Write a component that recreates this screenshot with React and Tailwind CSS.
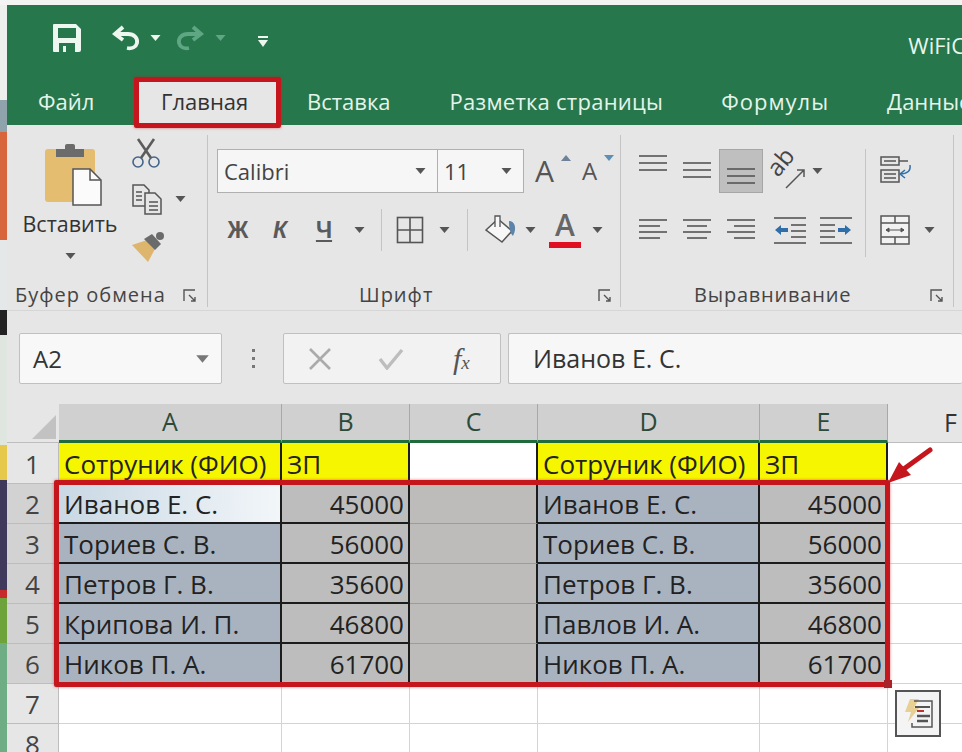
import React from 'react';

const UI = { fontFamily: '"Open Sans", "Noto Sans", sans-serif' };

const stripes = [
  ['h-[5px]', 'bg-[#f4f4f4]'],
  ['h-[95px]', 'bg-[#eef0ee]'],
  ['h-[32px]', 'bg-[#8fa3ad]'],
  ['h-[108px]', 'bg-[#d8663c]'],
  ['h-[70px]', 'bg-[#e4e8e8]'],
  ['h-[25px]', 'bg-[#222222]'],
  ['h-[110px]', 'bg-[#dfe6e0]'],
  ['h-[35px]', 'bg-[#e6c94a]'],
  ['h-[110px]', 'bg-[#3f3a5c]'],
  ['h-[8px]', 'bg-[#c62a2a]'],
  ['h-[45px]', 'bg-[#6ea33c]'],
  ['h-[109px]', 'bg-[#6fae84]'],
];

const Caret = ({ className = '', color = '#555555' }) => (
  <svg width="11" height="8" viewBox="0 0 11 8" className={`shrink-0 ${className}`}>
    <path d="M0.5 1h10L5.5 7z" fill={color} />
  </svg>
);

const Launcher = ({ className = '' }) => (
  <svg width="14" height="14" viewBox="0 0 14 14" className={className} fill="none" stroke="#555555" strokeWidth="1.4">
    <path d="M1 12V1h11" />
    <path d="M6 6l6 6M12 8v4H8" />
  </svg>
);

const SaveIcon = () => (
  <svg width="30" height="30" viewBox="0 0 30 30">
    <path fillRule="evenodd" fill="#eef6f0" d="M2 1h22l5 5v21a2 2 0 0 1-2 2H2a1 1 0 0 1-1-1V2a1 1 0 0 1 1-1zM6 5v10h18V5zM7 20v9h4v-6h3v6h9v-9z" />
  </svg>
);

const UndoIcon = ({ color, opacity = 1 }) => (
  <svg width="30" height="28" viewBox="0 0 30 28" fill="none" stroke={color} strokeWidth="3.8" opacity={opacity}>
    <path d="M12 3L4 10l8 6" />
    <path d="M4 10h13c6 0 10 4 9 9-1 4-5 6-10 5" />
  </svg>
);

const Lines = ({ rows, size = 30 }) => (
  <svg width={size} height={size} viewBox="0 0 30 30" stroke="#555555" strokeWidth="1.6">
    {rows.map(([x1, x2, y]) => (
      <line key={`${x1}-${y}`} x1={x1} x2={x2} y1={y} y2={y} />
    ))}
  </svg>
);

const Indent = ({ flip }) => (
  <svg width="34" height="30" viewBox="0 0 34 30" stroke="#555555" strokeWidth="1.6" className={flip ? '-scale-x-100' : ''}>
    <line x1="1" x2="33" y1="3" y2="3" />
    <line x1="18" x2="33" y1="10" y2="10" />
    <line x1="18" x2="33" y1="16" y2="16" />
    <line x1="18" x2="33" y1="22" y2="22" />
    <line x1="1" x2="33" y1="28" y2="28" />
    <path d="M2 15l6-5v3h7v4H8v3z" fill="#2f6ea8" stroke="none" />
  </svg>
);

const Slot = ({ children, className = '' }) => (
  <div className={`flex h-[44px] items-center justify-center ${className}`}>{children}</div>
);

function QuickAccess() {
  return (
    <div className="flex h-[73px] shrink-0 items-center pb-[8px]">
      <div className="ml-[45px]"><SaveIcon /></div>
      <div className="ml-[29px]"><UndoIcon color="#eef6f0" /></div>
      <Caret className="ml-[9px]" color="#eef6f0" />
      <div className="ml-[14px]" style={{ transform: 'scaleX(-1)' }}><UndoIcon color="#5fa684" /></div>
      <Caret className="ml-[10px]" color="#5fa684" />
      <svg width="12" height="12" viewBox="0 0 12 12" className="ml-[31px] mt-[8px]" fill="#eef6f0">
        <rect x="1" y="0" width="10" height="2" />
        <path d="M1 4h10L6 11z" />
      </svg>
      <span className="ml-auto mr-[-3px] mt-[16px] whitespace-nowrap text-[22px] text-[#e8f6ee]">WiFiC</span>
    </div>
  );
}

function Tabs() {
  return (
    <div className="flex h-[47px] shrink-0 items-center whitespace-nowrap text-[22px] text-[#e4f4ea]">
      <span className="ml-[31px] w-[58px] shrink-0 font-medium">Файл</span>
      <span className="ml-[42px] flex h-full w-[138px] shrink-0 items-center self-end bg-[#e6e6e6] pl-[23px] text-[#333333]">Главная</span>
      <span className="ml-[31px] shrink-0">Вставка</span>
      <span className="ml-[59px] shrink-0 tracking-[0.25px]">Разметка страницы</span>
      <span className="ml-[58px] shrink-0 tracking-[1px]">Формулы</span>
      <span className="ml-[58px] shrink-0">Данные</span>
    </div>
  );
}

function Clipboard() {
  return (
    <div className="flex h-[172px] w-[201px] shrink-0 flex-col border-r border-[#c4c4c4]">
      <div className="flex flex-1">
        <div className="ml-[13px] flex w-[100px] flex-col items-center">
          <svg width="60" height="64" viewBox="0 0 60 64" className="ml-[9px] mt-[7px]">
            <rect x="0" y="7" width="50" height="53" rx="3" fill="#e5bd70" />
            <rect x="11" y="7" width="28" height="8" fill="#6b6b6b" />
            <rect x="20" y="2" width="10" height="7" rx="2" fill="#6b6b6b" />
            <path d="M28 27h17l11 11v25H28z" fill="#fbfbfb" stroke="#555555" strokeWidth="1.5" />
            <path d="M45 27v11h11" fill="none" stroke="#555555" strokeWidth="1.5" />
          </svg>
          <span className="mt-[4px] whitespace-nowrap text-[21.5px] leading-[28px] text-[#333333]">Вставить</span>
          <Caret className="mt-[14px]" />
        </div>
        <div className="ml-[11px] flex flex-col">
          <svg width="30" height="30" viewBox="0 0 30 30" className="mt-[3px]" fill="none">
            <circle cx="7" cy="24" r="5" stroke="#44638a" strokeWidth="1.6" />
            <circle cx="23" cy="24" r="5" stroke="#44638a" strokeWidth="1.6" />
            <path d="M10 20L23 1M20 20L7 1" stroke="#5c5c5c" strokeWidth="2.6" />
          </svg>
          <div className="mt-[15px] flex items-center">
            <svg width="32" height="32" viewBox="0 0 32 32" fill="#e6e6e6" stroke="#555555" strokeWidth="1.5">
              <path d="M2 2h11l5 5v16H2z" />
              <path d="M14 10h10l6 6v15H14z" />
              <path d="M5 9h6M5 13h6M5 17h6M18 19h9M18 23h9M18 27h9" fill="none" />
            </svg>
            <Caret className="ml-[12px]" />
          </div>
          <svg width="34" height="32" viewBox="0 0 34 32" className="mt-[16px]">
            <path d="M1 14l15-5 8 9-7 13z" fill="#deb56c" />
            <path d="M13 8l8-5 9 10-6 6z" fill="#6b6b6b" />
            <circle cx="29" cy="5" r="4" fill="#6b6b6b" />
          </svg>
        </div>
      </div>
      <div className="flex h-[24px] items-center pr-[10px] text-[20px] text-[#444444]">
        <span className="ml-[8px] whitespace-nowrap tracking-[1px]">Буфер обмена</span>
        <Launcher className="ml-auto mt-[2px]" />
      </div>
    </div>
  );
}

function FontGroup() {
  return (
    <div className="flex h-[172px] w-[413px] shrink-0 flex-col border-r border-[#c4c4c4] pl-[9px] pt-[14px]">
      <div className="flex h-[44px] items-center">
        <div className="flex h-full w-[221px] items-center border border-[#b0b0b0] bg-[#f6f6f6] pl-[6px] pr-[11px] text-[22px] text-[#444444]">
          <span className="flex-1">Calibri</span>
          <Caret />
        </div>
        <div className="flex h-full w-[86px] items-center border border-l-0 border-[#b0b0b0] bg-[#f6f6f6] pl-[6px] pr-[11px] text-[22px] text-[#444444]">
          <span className="flex-1">11</span>
          <Caret />
        </div>
        <div className="relative ml-[11px] w-[36px] text-[30px] leading-[44px] text-[#555555]">
          A
          <svg width="10" height="6" viewBox="0 0 10 6" className="absolute right-[0px] top-[6px]"><path d="M0 6h10L5 0z" fill="#6d8296" /></svg>
        </div>
        <div className="relative ml-[11px] w-[36px] text-[24px] leading-[44px] text-[#555555]">
          A
          <svg width="10" height="6" viewBox="0 0 10 6" className="absolute right-[4px] top-[6px]"><path d="M0 0h10L5 6z" fill="#5f8fb4" /></svg>
        </div>
      </div>
      <div className="mt-[15px] flex h-[44px] items-center text-[#5a5a5a]">
        <span className="ml-[7px] w-[28px] text-center text-[23px] font-bold" style={{ fontFamily: '"Liberation Sans", sans-serif' }}>Ж</span>
        <span className="ml-[14px] w-[28px] text-center text-[23px] font-bold italic" style={{ fontFamily: '"Liberation Sans", sans-serif' }}>К</span>
        <span className="ml-[16px] w-[28px] text-center text-[23px] font-bold underline" style={{ fontFamily: '"Liberation Sans", sans-serif' }}>Ч</span>
        <Caret className="ml-[16px]" />
        <div className="ml-[16px] h-[42px] w-px bg-[#c4c4c4]" />
        <svg width="28" height="28" viewBox="0 0 28 28" className="ml-[14px]" fill="none" stroke="#555555" strokeWidth="1.6">
          <rect x="1.5" y="1.5" width="25" height="25" />
          <path d="M14 1.5v25M1.5 14h25" />
        </svg>
        <Caret className="ml-[15px]" />
        <div className="ml-[17px] h-[42px] w-px bg-[#c4c4c4]" />
        <svg width="32" height="32" viewBox="0 0 32 32" className="ml-[17px]" fill="none">
          <path d="M1 16L13 5l14 12-10 11z" fill="#f7f7f7" stroke="#555555" strokeWidth="1.5" />
          <path d="M10 13V2h5v11" fill="#f7f7f7" stroke="#555555" strokeWidth="1.3" />
          <path d="M24 7c6 0 8 7 4 15-3-3-4-8-4-15z" fill="#5c83a8" />
        </svg>
        <Caret className="ml-[8px]" />
        <div className="relative ml-[13px] flex h-[44px] w-[32px] flex-col items-center">
          <span className="text-[30px] font-semibold leading-[34px] text-[#666666]">A</span>
          <div className="h-[6px] w-[32px] bg-[#e00f22]" />
        </div>
        <Caret className="ml-[11px]" />
      </div>
      <div className="mt-auto flex h-[24px] items-center pr-[8px] text-[20px] text-[#444444]">
        <span className="ml-[142px] tracking-[1px]">Шрифт</span>
        <Launcher className="ml-auto mt-[2px]" />
      </div>
    </div>
  );
}

function AlignGroup() {
  return (
    <div className="flex h-[172px] w-[333px] shrink-0 flex-col border-r border-[#c4c4c4] pl-[10px] pt-[14px]">
      <div className="flex h-[44px] items-center">
        <Slot className="w-[44px] pb-[12px]"><Lines rows={[[1, 29, 6], [1, 29, 13], [1, 29, 20]]} /></Slot>
        <Slot className="w-[44px] pb-[2px]"><Lines rows={[[1, 29, 8], [1, 29, 15], [1, 29, 22]]} /></Slot>
        <Slot className="w-[44px] border border-[#a6a6a6] bg-[#bfbfbf] pt-[10px]"><Lines rows={[[1, 29, 8], [1, 29, 15], [1, 29, 22]]} /></Slot>
        <svg width="36" height="38" viewBox="0 0 36 38" className="ml-[9px] overflow-visible">
          <text x="6" y="26" fontSize="24" fill="#444444" transform="rotate(-50 6 26)" style={UI}>ab</text>
          <path d="M14 36L32 18M25 18h7v7" fill="none" stroke="#555555" strokeWidth="1.5" />
        </svg>
        <Caret className="ml-[4px]" />
        <div className="ml-[42px] h-[108px] w-px self-start bg-[#c4c4c4]" />
        <svg width="32" height="32" viewBox="0 0 32 32" className="ml-[14px]" fill="none" stroke="#555555" strokeWidth="1.5">
          <rect x="1" y="2" width="18" height="8" />
          <path d="M4 6h12M19 6h9" />
          <rect x="1" y="15" width="18" height="12" fill="#e6e6e6" />
          <path d="M4 19h12M4 23h12" />
          <path d="M30 10c1 6-3 9-10 9M25 15l-5 4 5 4" stroke="#2f6ea8" />
        </svg>
      </div>
      <div className="mt-[15px] flex h-[44px] items-center">
        <Slot className="w-[44px]"><Lines rows={[[1, 29, 5], [1, 22, 11], [1, 29, 17], [1, 22, 23]]} /></Slot>
        <Slot className="w-[44px]"><Lines rows={[[1, 29, 5], [5, 25, 11], [1, 29, 17], [5, 25, 23]]} /></Slot>
        <Slot className="w-[44px]"><Lines rows={[[1, 29, 5], [8, 29, 11], [1, 29, 17], [8, 29, 23]]} /></Slot>
        <div className="ml-[10px]"><Indent /></div>
        <div className="ml-[12px]"><Indent flip /></div>
        <svg width="30" height="30" viewBox="0 0 30 30" className="ml-[27px]" fill="#f2f2f2" stroke="#555555" strokeWidth="1.5">
          <rect x="1" y="1" width="28" height="28" />
          <path d="M1 8h28M1 22h28M15 1v7M15 22v7" fill="none" />
          <path d="M6 15h18M6 15l3-2v4zM24 15l-3-2v4z" fill="#555555" strokeWidth="1" />
        </svg>
        <Caret className="ml-[14px]" />
      </div>
      <div className="mt-auto flex h-[24px] items-center pr-[9px] text-[20px] text-[#444444]">
        <span className="ml-[63px] tracking-[0.8px]">Выравнивание</span>
        <Launcher className="ml-auto mt-[2px]" />
      </div>
    </div>
  );
}

function FormulaBar() {
  return (
    <div className="flex h-[94px] shrink-0 items-start border-t border-[#d6d6d6] pl-[12px] pt-[22px]">
      <div className="flex h-[51px] w-[203px] items-center rounded-[2px] border border-[#c0c0c0] bg-[#f8f8f8] pl-[13px] pr-[13px] text-[24px] text-[#333333]">
        <span className="flex-1">A2</span>
        <Caret color="#777777" className="scale-125" />
      </div>
      <div className="ml-[29px] flex h-[51px] w-[4px] flex-col items-center justify-center gap-[5px]">
        <i className="h-[3px] w-[3px] bg-[#777777]" />
        <i className="h-[3px] w-[3px] bg-[#777777]" />
        <i className="h-[3px] w-[3px] bg-[#777777]" />
      </div>
      <div className="ml-[28px] flex h-[51px] w-[218px] items-center rounded-[2px] border border-[#c0c0c0] bg-[#f2f2f2]">
        <svg width="24" height="22" viewBox="0 0 24 22" className="ml-[24px]" stroke="#aaaaaa" strokeWidth="2.6"><path d="M2 1l20 20M22 1L2 21" /></svg>
        <svg width="26" height="22" viewBox="0 0 26 22" className="ml-[46px]" fill="none" stroke="#bdbdbd" strokeWidth="3.4"><path d="M2 11l7 9L24 2" /></svg>
        <span className="ml-[49px] text-[30px] italic leading-none text-[#555555]" style={{ fontFamily: '"Liberation Serif", serif' }}>f<span className="text-[19px]">x</span></span>
      </div>
      <div className="ml-[7px] flex h-[51px] flex-1 items-center rounded-[2px] border border-r-0 border-[#c0c0c0] bg-[#f7f7f7] pl-[24px] text-[25px] text-[#333333]">
        Иванов Е. С.
      </div>
    </div>
  );
}

const columns = [
  { letter: 'A', head: 'w-[223px]' },
  { letter: 'B', head: 'w-[128px]' },
  { letter: 'C', head: 'w-[128px]' },
  { letter: 'D', head: 'w-[222px]' },
  { letter: 'E', head: 'w-[128px]' },
];

const rows = [
  { n: 2, a: 'Иванов Е. С.', b: '45000', d: 'Иванов Е. С.', e: '45000' },
  { n: 3, a: 'Ториев С. В.', b: '56000', d: 'Ториев С. В.', e: '56000' },
  { n: 4, a: 'Петров Г. В.', b: '35600', d: 'Петров Г. В.', e: '35600' },
  { n: 5, a: 'Крипова И. П.', b: '46800', d: 'Павлов И. А.', e: '46800' },
  { n: 6, a: 'Ников П. А.', b: '61700', d: 'Ников П. А.', e: '61700' },
];

const RowHead = ({ n, active }) => (
  <div className={`flex w-[52px] shrink-0 items-center justify-center border-b border-r border-[#bdbdbd] pt-[2px] text-[26px] text-[#444444] ${active ? 'bg-[#d2d2d2]' : 'bg-[#e6e6e6]'}`}>
    {n}
  </div>
);

function EmptyRow({ n }) {
  return (
    <div className="flex h-[40px] shrink-0">
      <RowHead n={n} />
      {columns.map((c) => (
        <div key={c.letter} className={`${c.head} shrink-0 border-b border-r border-[#d4d4d4] bg-white`} />
      ))}
      <div className="flex-1 border-b border-[#d4d4d4] bg-white" />
    </div>
  );
}

function Sheet() {
  const name = 'flex shrink-0 items-center overflow-hidden whitespace-nowrap border-b-2 border-r-2 border-[#1c1c1c] pl-[5px] pt-[3px] text-[26px] text-[#222222]';
  const num = 'flex shrink-0 items-center justify-end border-b-2 border-r-2 border-[#1c1c1c] pr-[4px] pt-[3px] text-[26px] text-[#222222]';
  return (
    <div className="flex flex-1 flex-col overflow-hidden">
      <div className="flex h-[39px] shrink-0">
        <div className="flex w-[52px] shrink-0 items-end justify-end border-b border-[#bdbdbd] bg-[#e6e6e6] pb-[3px] pr-[3px]">
          <svg width="24" height="24" viewBox="0 0 24 24"><path d="M24 0v24H0z" fill="#c2c2c2" /></svg>
        </div>
        {columns.map((c) => (
          <div key={c.letter} className={`${c.head} flex shrink-0 items-center justify-center border-b-[3px] border-r border-b-[#1f6b3c] border-r-[#a8a8a8] bg-[#d0d0d0] text-[25px] text-[#2c4a3a]`}>
            {c.letter}
          </div>
        ))}
        <div className="flex flex-1 items-center justify-end border-b border-[#bdbdbd] bg-[#e6e6e6] pr-[5px] text-[25px] text-[#333333]">F</div>
      </div>

      <div className="flex h-[41px] shrink-0">
        <RowHead n={1} />
        <div className={`${name} w-[223px] bg-[#f6f600]`}>Сотруник (ФИО)</div>
        <div className={`${name} w-[128px] bg-[#f6f600]`}>ЗП</div>
        <div className="w-[128px] shrink-0 border-r-2 border-[#1c1c1c] bg-white" />
        <div className={`${name} w-[222px] bg-[#f6f600]`}>Сотруник (ФИО)</div>
        <div className={`${name} w-[128px] bg-[#f6f600]`}>ЗП</div>
        <div className="flex-1 border-b border-[#d4d4d4] bg-white" />
      </div>

      {rows.map((r) => (
        <div key={r.n} className="flex h-[40px] shrink-0">
          <RowHead n={r.n} active />
          <div className={`${name} w-[223px] ${r.n === 2 ? 'bg-linear-to-r from-[#c9d8e4] to-[#f2f6f9]' : 'bg-[#a9b3c0]'}`}>{r.a}</div>
          <div className={`${num} w-[128px] bg-[#bdbdbd]`}>{r.b}</div>
          <div className="w-[128px] shrink-0 border-b border-r-2 border-b-[#9c9c9c] border-r-[#1c1c1c] bg-[#bebcbb]" />
          <div className={`${name} w-[222px] bg-[#a9b3c0]`}>{r.d}</div>
          <div className={`${num} w-[128px] bg-[#bdbdbd]`}>{r.e}</div>
          <div className="flex-1 border-b border-[#d4d4d4] bg-white" />
        </div>
      ))}

      <EmptyRow n={7} />
      <EmptyRow n={8} />
    </div>
  );
}

export default function App() {
  return (
    <div className="relative flex h-[752px] w-[962px] overflow-hidden bg-[#e6e6e6]" style={UI}>
      <div className="flex w-[7px] shrink-0 flex-col">
        {stripes.map(([h, bg], i) => (
          <div key={i} className={`${h} ${bg}`} />
        ))}
      </div>
      <div className="flex min-w-0 flex-1 flex-col">
        <div className="h-[5px] shrink-0 bg-[#f2f4f2]" />
        <div className="flex h-[120px] shrink-0 flex-col overflow-hidden bg-[#27774c]">
          <QuickAccess />
          <Tabs />
        </div>
        <div className="flex h-[185px] shrink-0 pt-[10px]">
          <Clipboard />
          <FontGroup />
          <AlignGroup />
        </div>
        <FormulaBar />
        <Sheet />
      </div>

      {/* Red call-outs drawn over the screenshot */}
      <div className="pointer-events-none absolute left-[134px] top-[77px] h-[51px] w-[147px] rounded-[2px] border-[5px] border-[#c4161c] shadow-[0_0_3px_rgba(200,30,30,0.6)]" />
      <div className="pointer-events-none absolute left-[54px] top-[480px] h-[207px] w-[836px] rounded-[2px] border-[5px] border-[#c4161c] shadow-[0_0_3px_rgba(200,30,30,0.6)]" />
      <div className="absolute left-[884px] top-[680px] h-[8px] w-[8px] bg-[#a8242a]" />
      <svg width="48" height="40" viewBox="0 0 48 40" className="absolute left-[887px] top-[446px]">
        <path d="M43 4L14 25" stroke="#c4161c" strokeWidth="5" strokeLinecap="round" />
        <path d="M1 37l11-21 12 13z" fill="#c4161c" />
      </svg>
      <div className="absolute left-[895px] top-[690px] flex h-[47px] w-[46px] items-center justify-center border-2 border-[#555555] bg-[#f4f4f4]">
        <svg width="32" height="32" viewBox="0 0 32 32">
          <path d="M8 1h9l-5 9h5L6 24l3-10H3z" fill="#e8cf94" />
          <path d="M12 3h18v26H10v-4" fill="none" stroke="#555555" strokeWidth="1.5" />
          <path d="M13 9h15" stroke="#555555" strokeWidth="2" />
          <path d="M15 13h7" stroke="#b33" strokeWidth="2" />
          <path d="M15 18h13M15 23h11" stroke="#555555" strokeWidth="2.4" />
        </svg>
      </div>
    </div>
  );
}
